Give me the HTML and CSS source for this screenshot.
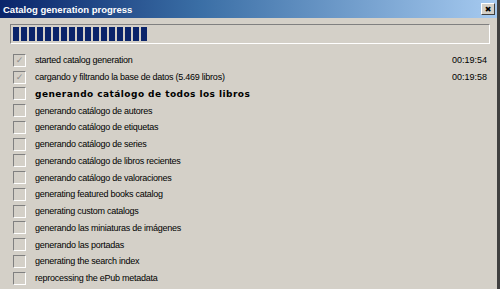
FILE: index.html
```html
<!DOCTYPE html>
<html lang="es">
<head>
  <meta charset="UTF-8" />
  <title>Catalog generation progress</title>
  <link rel="stylesheet" href="styles.css">
</head>
<body>
  <div class="window">
    <div class="titlebar">
      <span class="title">Catalog generation progress</span>
      <span class="close">&#x2716;</span>
    </div>

    <div class="progress">
      <div class="blocks">
        <i></i><i></i><i></i><i></i><i></i><i></i><i></i><i></i><i></i>
        <i></i><i></i><i></i><i></i><i></i><i></i><i></i><i></i>
      </div>
    </div>

    <ul class="steps">
      <li class="done"><span class="box">&#x2713;</span><span class="label">started catalog generation</span><span class="time">00:19:54</span></li>
      <li class="done"><span class="box">&#x2713;</span><span class="label">cargando y filtrando la base de datos (5.469 libros)</span><span class="time">00:19:58</span></li>
      <li class="current"><span class="box"></span><span class="label">generando catálogo de todos los libros</span></li>
      <li><span class="box"></span><span class="label">generando catálogo de autores</span></li>
      <li><span class="box"></span><span class="label">generando catálogo de etiquetas</span></li>
      <li><span class="box"></span><span class="label">generando catálogo de series</span></li>
      <li><span class="box"></span><span class="label">generando catálogo de libros recientes</span></li>
      <li><span class="box"></span><span class="label">generando catálogo de valoraciones</span></li>
      <li><span class="box"></span><span class="label">generating featured books catalog</span></li>
      <li><span class="box"></span><span class="label">generating custom catalogs</span></li>
      <li><span class="box"></span><span class="label">generando las miniaturas de imágenes</span></li>
      <li><span class="box"></span><span class="label">generando las portadas</span></li>
      <li><span class="box"></span><span class="label">generating the search index</span></li>
      <li><span class="box"></span><span class="label">reprocessing the ePub metadata</span></li>
    </ul>
  </div>
</body>
</html>
```

FILE: styles.css
```css
html, body {
  margin: 0;
  padding: 0;
}

body {
  font-family: "Liberation Sans", Arial, sans-serif;
  font-size: 9px;
  letter-spacing: -0.25px;
  color: #000;
  background: #d4d0c8;
}

.window {
  width: 497px;
  height: 289px;
  background: #d4d0c8;
  border-right: 3px solid #404040;
  overflow: hidden;
}

.titlebar {
  height: 18px;
  display: flex;
  align-items: center;
  justify-content: space-between;
  padding: 0 2px 0 3px;
  background: linear-gradient(90deg, #0a246a 0%, #3a6ea5 40%, #a6caf0 100%);
}

.title {
  color: #fff;
  font-weight: bold;
  font-size: 9.5px;
  letter-spacing: 0;
}

.close {
  width: 12px;
  height: 10px;
  display: flex;
  align-items: center;
  justify-content: center;
  font-family: "DejaVu Sans", sans-serif;
  font-size: 8px;
  color: #000;
  background: #d4d0c8;
  border: 1px solid;
  border-color: #fff #404040 #404040 #fff;
}

.progress {
  margin: 6px 7px 0 10px;
  height: 14px;
  border: 1px solid;
  border-color: #808080 #fff #fff #808080;
  padding: 2px;
}

.blocks {
  display: flex;
  gap: 2px;
  height: 100%;
}

.blocks i {
  width: 6px;
  background: #0a246a;
}

.steps {
  list-style: none;
  margin: 8px 0 0;
  padding: 0 10px 0 13px;
}

.steps li {
  display: flex;
  align-items: center;
  height: 16.75px;
}

.box {
  width: 11px;
  height: 11px;
  border: 1px solid;
  border-color: #808080 #fff #fff #808080;
  background: #d4d0c8;
  color: #8c8c8c;
  font-family: "DejaVu Sans", sans-serif;
  font-size: 9px;
  line-height: 11px;
  text-align: center;
  font-weight: bold;
  letter-spacing: 0;
  margin-right: 9px;
  flex-shrink: 0;
}

.label {
  flex: 1;
}

.current .label {
  font-family: "DejaVu Sans", sans-serif;
  font-weight: bold;
  font-size: 9px;
  letter-spacing: 0.45px;
}

.time {
  letter-spacing: 0;
}
```
